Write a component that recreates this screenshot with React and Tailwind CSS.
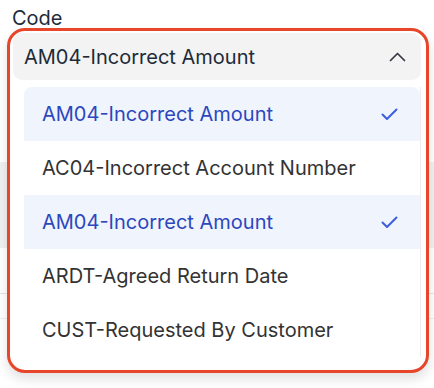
import React from "react";

const OPTIONS = [
  { label: "AM04-Incorrect Amount", selected: true },
  { label: "AC04-Incorrect Account Number" },
  { label: "AM04-Incorrect Amount", selected: true },
  { label: "ARDT-Agreed Return Date" },
  { label: "CUST-Requested By Customer" },
];

function Check() {
  return (
    <svg width="17" height="13" viewBox="0 0 17 13" fill="none">
      <path d="M1.5 6.5 L6 11 L15.5 1.5" stroke="#3d5de0" strokeWidth="2" strokeLinecap="round" strokeLinejoin="round" />
    </svg>
  );
}

function ChevronUp() {
  return (
    <svg width="17" height="10" viewBox="0 0 17 10" fill="none">
      <path d="M1.5 8.5 L8.5 1.5 L15.5 8.5" stroke="#333a40" strokeWidth="1.7" strokeLinecap="round" strokeLinejoin="round" />
    </svg>
  );
}

export default function App() {
  return (
    <div className="relative w-[434px] h-[388px] overflow-hidden bg-white" style={{ fontFamily: "Inter, 'Noto Sans', sans-serif" }}>
      {/* form behind the open menu */}
      <div className="flex flex-col">
        <div className="pl-3 pt-[5px] h-[31px] text-[20px] leading-[26px] text-[#1d2b3a]">Code</div>
        <div className="h-[131px]" />
        <div className="h-[86px] bg-[#f1f1f1]" />
        <div className="h-[45px]" />
        <div className="h-px bg-[#e6e6e6]" />
        <div className="h-[24px]" />
        <div className="h-px bg-[#efefef]" />
      </div>

      {/* open menu with highlight frame */}
      <div className="absolute left-[7px] top-[28px] w-[422px] h-[345px] rounded-[18px] border-[3px] border-[#e8462b] bg-white shadow-[0_6px_12px_rgba(0,0,0,0.12)] overflow-hidden">
        <div className="flex flex-col pl-[3px] pr-[5px] pt-[2px]">
          <div className="h-[47px] rounded-[9px] bg-[#f3f3f3] flex items-center justify-between pl-[11px] pr-[15px] text-[20px] text-[#1d2b3a]">
            <span>AM04-Incorrect Amount</span>
            <ChevronUp />
          </div>
          <div className="mt-[7px] ml-[11px] flex flex-col border-r border-[#ececec]">
            {OPTIONS.map((o, i) => (
              <div
                key={i}
                className={
                  o.selected
                    ? "h-[54px] flex items-center justify-between pl-[18px] pr-[22px] bg-[#eff4fd] text-[#2d47bd] text-[20px] first:rounded-t-[8px]"
                    : "h-[54px] flex items-center justify-between pl-[18px] pr-[22px] text-[#333] text-[20px]"
                }
              >
                <span>{o.label}</span>
                {o.selected && <Check />}
              </div>
            ))}
          </div>
        </div>
      </div>
    </div>
  );
}
